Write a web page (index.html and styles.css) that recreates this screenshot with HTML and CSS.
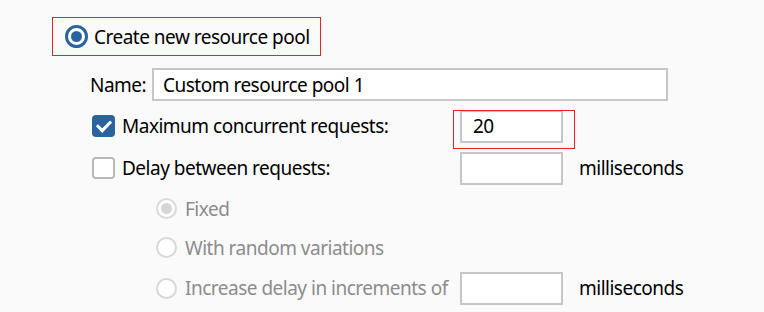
FILE: index.html
```html
<!DOCTYPE html>
<html lang="en">
<head>
    <meta charset="UTF-8">
    <title>Resource pool</title>
    <link rel="stylesheet" href="styles.css">
</head>
<body>
    <div class="panel">
        <label class="pool-choice">
            <span class="radio checked"></span>
            <span>Create new resource pool</span>
        </label>

        <div class="name-row">
            <span class="name-label">Name:</span>
            <div class="field name-field">Custom resource pool 1</div>
        </div>

        <div class="row first">
            <div class="option">
                <span class="check checked"></span>
                <span>Maximum concurrent requests:</span>
            </div>
            <div class="field small highlight">20</div>
        </div>

        <div class="row">
            <div class="option">
                <span class="check"></span>
                <span>Delay between requests:</span>
            </div>
            <div class="field small"></div>
            <span class="unit">milliseconds</span>
        </div>

        <div class="row sub short">
            <div class="option disabled">
                <span class="radio dim checked"></span>
                <span>Fixed</span>
            </div>
        </div>

        <div class="row sub short">
            <div class="option disabled">
                <span class="radio dim"></span>
                <span>With random variations</span>
            </div>
        </div>

        <div class="row sub">
            <div class="option disabled">
                <span class="radio dim"></span>
                <span>Increase delay in increments of</span>
            </div>
            <div class="field small"></div>
            <span class="unit">milliseconds</span>
        </div>
    </div>
</body>
</html>
```

FILE: styles.css
```css
* {
    margin: 0;
    padding: 0;
    box-sizing: border-box;
}

body {
    font-family: "Noto Sans", "Open Sans", sans-serif;
    font-size: 19px;
    letter-spacing: -0.5px;
    color: #000;
    background: #fafafa;
    width: 764px;
    height: 312px;
    overflow: hidden;
}

.panel {
    padding: 17px 0 0 52px;
}

.pool-choice {
    display: inline-flex;
    align-items: center;
    gap: 6px;
    height: 39px;
    padding: 0 10px 0 12px;
    border: 1px solid #e3222c;
}

/* radio buttons */
.radio {
    width: 23px;
    height: 23px;
    border-radius: 50%;
    border: 2px solid #d8d8d8;
    background: #fff;
    display: flex;
    align-items: center;
    justify-content: center;
    flex-shrink: 0;
}

.radio.checked {
    border: 3px solid #2a639e;
}

.radio.checked::after {
    content: "";
    width: 11px;
    height: 11px;
    border-radius: 50%;
    background: #2a639e;
}

.radio.dim {
    width: 21px;
    height: 21px;
}

.radio.dim.checked {
    border: 2px solid #dadada;
}

.radio.dim.checked::after {
    width: 11px;
    height: 11px;
    background: #d6d6d6;
}

/* checkboxes */
.check {
    width: 23px;
    height: 22px;
    border-radius: 4px;
    border: 2px solid #b9b9b9;
    background: #fff;
    flex-shrink: 0;
    display: flex;
    align-items: center;
    justify-content: center;
}

.check.checked {
    border: none;
    background: #2a639e;
}

.check.checked::after {
    content: "";
    width: 11px;
    height: 6px;
    border-left: 3px solid #fff;
    border-bottom: 3px solid #fff;
    transform: translateY(-2px) rotate(-45deg);
}

.name-row {
    display: flex;
    align-items: center;
    margin: 12px 0 0 38px;
    height: 33px;
}

.name-label {
    width: 62px;
}

.field {
    height: 33px;
    border: 2px solid #c6c6c6;
    background: #fff;
    padding: 0 9px;
    display: flex;
    align-items: center;
}

.name-field {
    width: 516px;
}

.row {
    display: flex;
    align-items: center;
    height: 42px;
    margin-left: 40px;
}

.row.first {
    margin-top: 4px;
}

.row.short {
    height: 39px;
}

.option {
    display: flex;
    align-items: center;
    gap: 7px;
    width: 368px;
    white-space: nowrap;
}

.sub .option {
    padding-left: 64px;
    gap: 8px;
}

.option.disabled {
    color: #8c8c8c;
}

.field.small {
    width: 103px;
    padding-left: 11px;
}

.highlight {
    position: relative;
}

.highlight::after {
    content: "";
    position: absolute;
    inset: -2px -14px -8px -9px;
    border: 1px solid #e3222c;
}

.unit {
    margin-left: 16px;
}
```
